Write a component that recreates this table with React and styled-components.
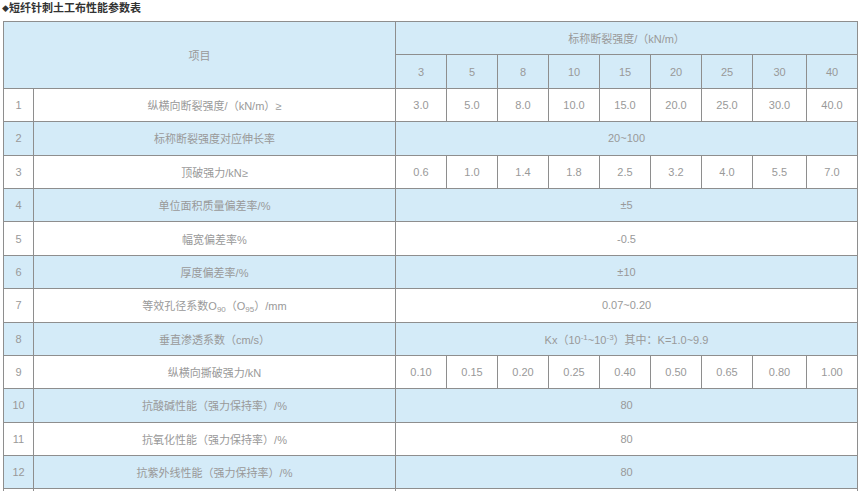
import React from "react";
import styled, { createGlobalStyle } from "styled-components";

const GlobalStyle = createGlobalStyle`
  html, body {
    margin: 0;
    padding: 0;
    background: #fff;
  }
  body {
    font-family: "Liberation Sans", Arial, "Noto Sans CJK SC", sans-serif;
  }
`;

const Page = styled.div`
  padding: 0 2px 0 3px;
`;

const Title = styled.h3`
  margin: 0 0 0 -1px;
  padding: 1px 0 0 0;
  height: 20px;
  font-size: 11px;
  line-height: 12px;
  font-weight: bold;
  color: #333;
  font-family: "Noto Sans CJK SC", sans-serif;
`;

const Bullet = styled.span`
  font-size: 7px;
  vertical-align: 1px;
`;

const Table = styled.table`
  border-collapse: collapse;
  table-layout: fixed;
  width: 855px;
  color: #999;
  font-size: 11px;
`;

const Cell = styled.td`
  border: 1px solid #8e8e8e;
  height: 32.4px;
  padding: 0;
  text-align: center;
  vertical-align: middle;
  background: ${(p) => (p.$blue ? "#d4ebf8" : "#fff")};
  font-family: "Liberation Sans", Arial, "Noto Sans CJK SC", sans-serif;
  white-space: nowrap;
`;

const Sub = styled.sub`
  font-size: 8px;
  vertical-align: -2px;
  line-height: 0;
`;

const Sup = styled.sup`
  font-size: 8px;
  vertical-align: 4px;
  line-height: 0;
`;

const grades = ["3", "5", "8", "10", "15", "20", "25", "30", "40"];
const colWidths = [30, 362, 51, 51, 51, 51, 51, 51, 51, 54, 51];

const rows = [
  { label: "纵横向断裂强度/（kN/m）≥", values: ["3.0", "5.0", "8.0", "10.0", "15.0", "20.0", "25.0", "30.0", "40.0"] },
  { label: "标称断裂强度对应伸长率", span: "20~100" },
  { label: "顶破强力/kN≥", values: ["0.6", "1.0", "1.4", "1.8", "2.5", "3.2", "4.0", "5.5", "7.0"] },
  { label: "单位面积质量偏差率/%", span: "±5" },
  { label: "幅宽偏差率%", span: "-0.5" },
  { label: "厚度偏差率/%", span: "±10" },
  {
    label: (
      <>
        等效孔径系数O<Sub>90</Sub>（O<Sub>95</Sub>）/mm
      </>
    ),
    span: "0.07~0.20",
  },
  {
    label: "垂直渗透系数（cm/s）",
    span: (
      <>
        Kx（10<Sup>-1</Sup>~10<Sup>-3</Sup>）其中：K=1.0~9.9
      </>
    ),
  },
  { label: "纵横向撕破强力/kN", values: ["0.10", "0.15", "0.20", "0.25", "0.40", "0.50", "0.65", "0.80", "1.00"] },
  { label: "抗酸碱性能（强力保持率）/%", span: "80" },
  { label: "抗氧化性能（强力保持率）/%", span: "80" },
  { label: "抗紫外线性能（强力保持率）/%", span: "80" },
];

export default function App() {
  return (
    <Page>
      <GlobalStyle />
      <Title>
        <Bullet>◆</Bullet>短纤针刺土工布性能参数表
      </Title>
      <Table>
        <colgroup>
          {colWidths.map((w, i) => (
            <col key={i} style={{ width: w }} />
          ))}
        </colgroup>
        <tbody>
          <tr>
            <Cell $blue colSpan={2} rowSpan={2}>项目</Cell>
            <Cell $blue colSpan={9}>标称断裂强度/（kN/m）</Cell>
          </tr>
          <tr>
            {grades.map((g) => (
              <Cell $blue key={g}>{g}</Cell>
            ))}
          </tr>
          {rows.map((r, i) => {
            const blue = i % 2 === 1;
            return (
              <tr key={i}>
                <Cell $blue={blue}>{i + 1}</Cell>
                <Cell $blue={blue}>{r.label}</Cell>
                {r.values ? (
                  r.values.map((v, j) => (
                    <Cell $blue={blue} key={j}>{v}</Cell>
                  ))
                ) : (
                  <Cell $blue={blue} colSpan={9}>{r.span}</Cell>
                )}
              </tr>
            );
          })}
          <tr>
            <Cell />
            <Cell />
            <Cell colSpan={9} />
          </tr>
        </tbody>
      </Table>
    </Page>
  );
}
